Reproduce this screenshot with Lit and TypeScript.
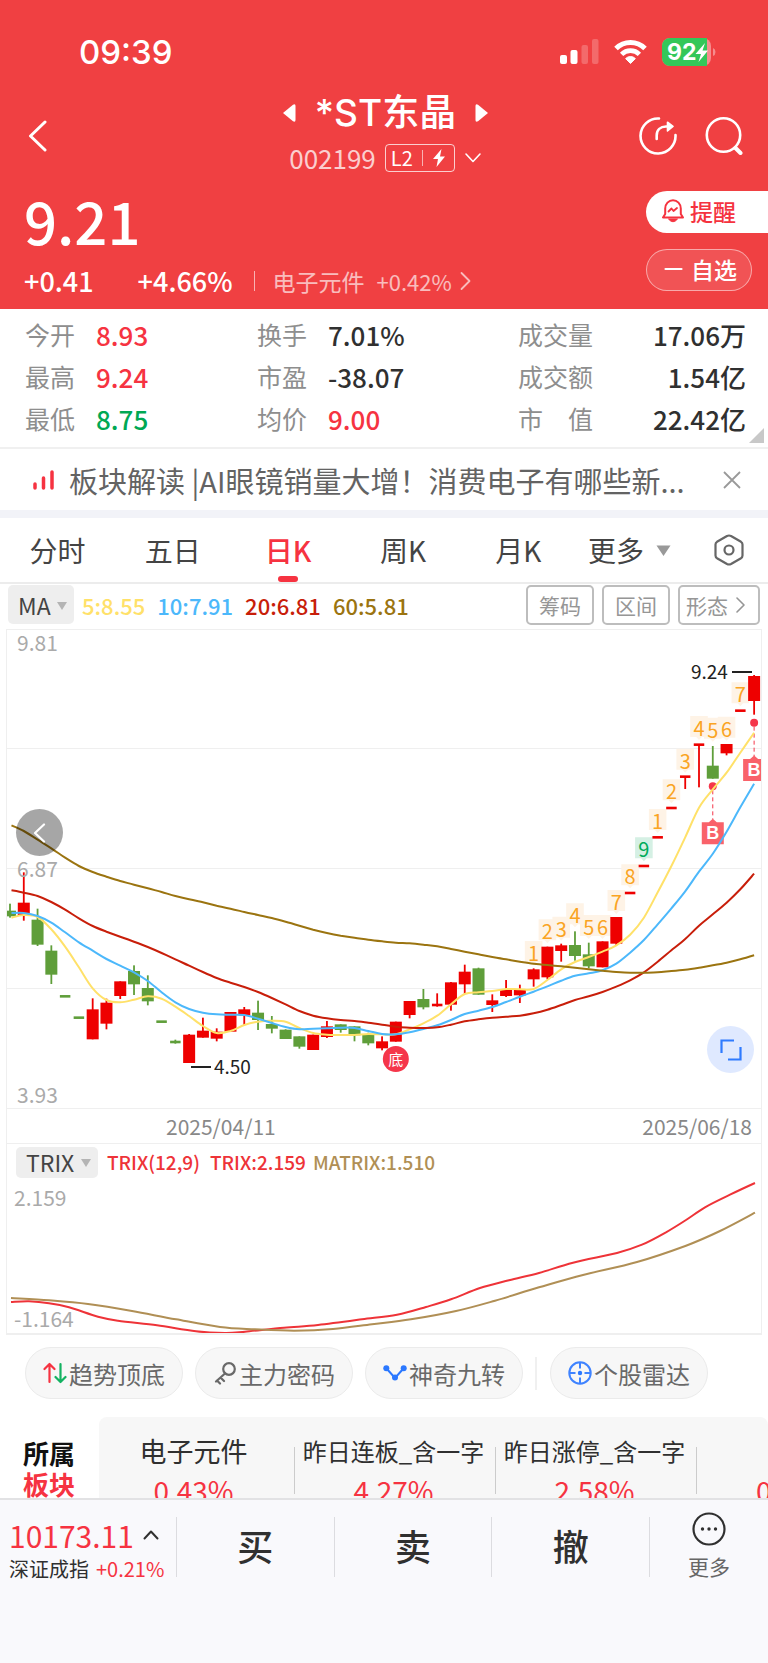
import { LitElement, html, svg, css } from "lit";
import { customElement, property, state } from "lit/decorators.js";
import { classMap } from "lit/directives/class-map.js";

/* Chart samples are stored in thirds of a pixel. */
const UNIT = 3;
const px = (v: number) => v / UNIT;
const STEP = 13.78;
const cx = (i: number) => 10 + STEP * i;

type Candle = [up: boolean, high: number, top: number, bottom: number, low: number];
const R = true;
const G = false;
const CANDLES: Candle[] = [
  [G, 851, 872, 889, 893], [R, 757, 848, 885, 902], [G, 866, 899, 974, 978],
  [G, 976, 992, 1064, 1092], [G, 1129, 1129, 1129, 1129], [G, 1193, 1193, 1193, 1193],
  [R, 1135, 1168, 1258, 1258], [R, 1136, 1148, 1211, 1228], [R, 1084, 1084, 1128, 1137],
  [G, 1036, 1053, 1093, 1125], [G, 1066, 1104, 1144, 1156], [G, 1205, 1205, 1205, 1205],
  [G, 1259, 1266, 1266, 1271], [R, 1242, 1244, 1329, 1329], [R, 1193, 1232, 1253, 1253],
  [R, 1225, 1235, 1256, 1264], [R, 1176, 1176, 1235, 1235], [R, 1161, 1168, 1186, 1216],
  [G, 1142, 1178, 1200, 1230], [G, 1188, 1212, 1226, 1240], [G, 1228, 1229, 1257, 1257],
  [G, 1249, 1249, 1280, 1286], [R, 1244, 1244, 1290, 1290], [R, 1203, 1219, 1251, 1254],
  [G, 1213, 1213, 1230, 1238], [G, 1219, 1219, 1246, 1264], [G, 1238, 1242, 1270, 1276],
  [R, 1249, 1264, 1285, 1291], [R, 1205, 1205, 1265, 1265], [R, 1143, 1143, 1185, 1195],
  [G, 1107, 1137, 1162, 1168], [R, 1120, 1155, 1155, 1160], [R, 1086, 1087, 1154, 1172],
  [R, 1034, 1055, 1093, 1122], [G, 1043, 1045, 1124, 1124], [R, 1123, 1141, 1155, 1176],
  [R, 1080, 1110, 1128, 1131], [R, 1094, 1110, 1126, 1149], [R, 1045, 1048, 1078, 1100],
  [R, 980, 980, 1072, 1078], [R, 971, 976, 993, 1025], [G, 934, 975, 1008, 1022],
  [G, 968, 1003, 1039, 1045], [R, 964, 964, 1042, 1042], [R, 891, 891, 971, 975],
  [R, 819, 819, 819, 819], [R, 738, 738, 738, 738], [R, 652, 652, 652, 652],
  [R, 564, 564, 564, 564], [R, 469, 470, 470, 507], [R, 373, 374, 374, 502],
  [G, 378, 437, 476, 476], [R, 372, 372, 400, 406], [R, 272, 272, 272, 272],
  [R, 165, 168, 243, 284],
];

const AVERAGES: { cls: string; values: number[] }[] = [
  {
    cls: "ma5",
    values: [893, 885, 891, 928, 980, 1042, 1105, 1140, 1147, 1139, 1129, 1136, 1160, 1188, 1218, 1239, 1233, 1215, 1205, 1202, 1205, 1224, 1239, 1244, 1245, 1245, 1242, 1243, 1243, 1228, 1210, 1187, 1153, 1122, 1117, 1113, 1107, 1108, 1107, 1080, 1048, 1026, 1011, 995, 976, 944, 893, 817, 738, 652, 563, 508, 458, 398, 338],
  },
  {
    cls: "ma10",
    values: [879, 879, 888, 908, 937, 967, 992, 1017, 1037, 1057, 1083, 1117, 1147, 1167, 1178, 1183, 1184, 1185, 1196, 1209, 1221, 1228, 1226, 1225, 1223, 1224, 1233, 1242, 1243, 1237, 1227, 1216, 1200, 1182, 1172, 1161, 1146, 1130, 1115, 1099, 1082, 1067, 1060, 1051, 1031, 998, 960, 913, 865, 814, 755, 701, 635, 562, 491],
  },
  {
    cls: "ma20",
    values: [811, 818, 828, 846, 869, 895, 918, 935, 950, 965, 981, 999, 1018, 1037, 1056, 1074, 1088, 1101, 1116, 1134, 1153, 1173, 1187, 1195, 1200, 1203, 1208, 1214, 1220, 1223, 1224, 1222, 1214, 1204, 1198, 1193, 1190, 1187, 1180, 1169, 1155, 1140, 1129, 1116, 1100, 1081, 1057, 1025, 991, 957, 917, 883, 848, 808, 761],
  },
  {
    cls: "ma60",
    values: [616, 633, 659, 685, 713, 738, 756, 770, 783, 794, 805, 816, 828, 838, 847, 857, 866, 876, 885, 894, 905, 917, 929, 939, 947, 953, 959, 964, 968, 970, 974, 979, 987, 995, 1003, 1011, 1018, 1025, 1031, 1035, 1039, 1043, 1048, 1052, 1056, 1058, 1058, 1057, 1053, 1049, 1043, 1036, 1028, 1018, 1006],
  },
];

/* Nine-turn counters: candle index, digit, top of the tag. */
const TURNS: [number, string, number][] = [
  [38, "1", 963], [39, "2", 898], [40, "3", 890], [41, "4", 850], [42, "5", 885],
  [43, "6", 885], [44, "7", 810], [45, "8", 733], [46, "9", 652], [47, "1", 567],
  [48, "2", 478], [49, "3", 386], [50, "4", 288], [51, "5", 293], [52, "6", 290],
  [53, "7", 187],
];

/* Buy marks: candle index, dot, top of the tag. */
const BUYS: [number, number, number][] = [[51, 499, 607], [54, 308, 417]];

const TRIX: [number, number][] = [
  [11, 636], [29, 634], [49, 640], [69, 652], [98, 680], [118, 692], [157, 706], [196, 724],
  [225, 729], [245, 725], [284, 713], [318, 705], [362, 688], [397, 674], [426, 651],
  [451, 628], [480, 594], [509, 571], [539, 549], [573, 518], [617, 489], [642, 464],
  [666, 427], [686, 390], [705, 352], [730, 314], [755, 279],
];
const MATRIX: [number, number][] = [
  [11, 624], [49, 631], [88, 642], [132, 663], [176, 688], [220, 711], [255, 718],
  [294, 722], [333, 717], [372, 703], [411, 688], [456, 663], [495, 632], [539, 592],
  [583, 555], [637, 516], [686, 467], [720, 423], [755, 368],
];

function smooth(pts: [number, number][]): string {
  let d = `M${pts[0][0]} ${pts[0][1]}`;
  for (let i = 0; i < pts.length - 1; i++) {
    const p0 = pts[Math.max(i - 1, 0)];
    const p1 = pts[i];
    const p2 = pts[i + 1];
    const p3 = pts[Math.min(i + 2, pts.length - 1)];
    const c = [
      p1[0] + (p2[0] - p0[0]) / 6, p1[1] + (p2[1] - p0[1]) / 6,
      p2[0] - (p3[0] - p1[0]) / 6, p2[1] - (p3[1] - p1[1]) / 6,
      p2[0], p2[1],
    ].map((n) => n.toFixed(1));
    d += `C${c.join(" ")}`;
  }
  return d;
}

const base = css`
  :host {
    font-family: "Noto Sans CJK SC", "Noto Sans", sans-serif;
    color: #303030;
  }
  * {
    box-sizing: border-box;
  }
  button,
  select {
    font: inherit;
    color: inherit;
    background: none;
    border: 0;
    padding: 0;
    margin: 0;
    cursor: pointer;
  }
  a {
    color: inherit;
    text-decoration: none;
  }
  svg {
    display: block;
    flex: none;
  }
  .line {
    fill: none;
    stroke: currentColor;
    stroke-linecap: round;
    stroke-linejoin: round;
  }
`;

@customElement("stock-header")
export class StockHeader extends LitElement {
  static styles = [
    base,
    css`
      :host {
        display: block;
        background: #f04042;
        color: #fff;
      }
      .status {
        display: flex;
        align-items: center;
        justify-content: space-between;
        height: 91px;
        padding: 12px 52px 0 79px;
      }
      .clock {
        font: 500 33px/40px Inter, "Liberation Sans", sans-serif;
      }
      .signals {
        display: flex;
        align-items: center;
        gap: 15px;
      }
      .pct {
        font: 700 23px Inter, "Liberation Sans", sans-serif;
        fill: #fff;
      }
      .nav {
        display: grid;
        grid-template-columns: 1fr auto 1fr;
        height: 90px;
        padding: 0 25px 0 28px;
      }
      .back {
        display: flex;
        align-items: center;
        width: 48px;
      }
      .title {
        display: flex;
        flex-direction: column;
        align-items: center;
        gap: 9px;
      }
      .name-row {
        display: flex;
        align-items: center;
        gap: 19px;
      }
      h1 {
        margin: 0;
        font: 500 37px/44px Inter, "Noto Sans CJK SC", sans-serif;
      }
      .code-row {
        display: flex;
        align-items: center;
        gap: 9px;
        height: 28px;
        font-size: 26px;
        line-height: 28px;
      }
      .code {
        opacity: 0.75;
      }
      .level {
        display: flex;
        align-items: center;
        gap: 9px;
        height: 28px;
        padding: 0 8px 0 5px;
        border: 1px solid rgba(255, 255, 255, 0.75);
        border-radius: 4px;
        font-size: 20px;
        line-height: 26px;
      }
      .bar {
        width: 1px;
        height: 16px;
        background: currentColor;
        opacity: 0.6;
      }
      .tools {
        display: flex;
        justify-content: flex-end;
        align-items: center;
        gap: 28px;
      }
      .quote {
        display: flex;
        justify-content: space-between;
        padding: 10px 0 13px 24px;
      }
      .price {
        font-size: 58px;
        font-weight: 500;
        line-height: 58px;
        margin-bottom: 17px;
      }
      .change {
        display: flex;
        align-items: center;
        font-size: 27px;
        font-weight: 500;
        line-height: 30px;
      }
      .change .ratio {
        margin: 0 21px 0 44px;
      }
      .change .bar {
        height: 20px;
      }
      .industry {
        display: flex;
        align-items: center;
        gap: 12px;
        margin-left: 18px;
        font-size: 23px;
        font-weight: 400;
        opacity: 0.65;
      }
      .industry .tail {
        display: flex;
        align-items: center;
        gap: 8px;
        font-size: 22px;
      }
      .actions {
        display: flex;
        flex-direction: column;
        align-items: flex-end;
        gap: 16px;
      }
      .actions button {
        display: flex;
        align-items: center;
        gap: 6px;
        height: 42px;
        padding-bottom: 2px;
        font-size: 23px;
        font-weight: 500;
      }
      .remind {
        width: 122px;
        padding-left: 16px;
        border-radius: 21px 0 0 21px;
        background: #fff;
        color: #f5333f;
      }
      .actions .fav {
        width: 106px;
        margin-right: 16px;
        padding-left: 17px;
        gap: 8px;
        border: 1px solid rgba(255, 255, 255, 0.5);
        border-radius: 21px;
        background: rgba(255, 255, 255, 0.1);
      }
    `,
  ];

  render() {
    return html`
      <div class="status">
        <span class="clock">09:39</span>
        <div class="signals">
          <svg width="39" height="25" viewBox="0 0 39 25" fill="#fff" aria-label="信号">
            <rect x="0" y="16" width="7" height="9" rx="2" />
            <rect x="10.500" y="11" width="7" height="14" rx="2" />
            <rect x="21.500" y="6" width="6.500" height="19" rx="2" opacity=".22" />
            <rect x="32" y="0" width="6.500" height="25" rx="2" opacity=".22" />
          </svg>
          <svg width="33" height="25" viewBox="0 0 33 25" aria-label="无线网络">
            <path d="M2 9.5A20.5 20.5 0 0 1 31 9.5" fill="none" stroke="#fff" stroke-width="5" />
            <path d="M7.6 15.3A12.5 12.5 0 0 1 25.4 15.3" fill="none" stroke="#fff" stroke-width="4.6" />
            <path d="M16.5 24.5L11.6 19.6A6.8 6.8 0 0 1 21.4 19.6Z" fill="#fff" stroke="#fff" stroke-linejoin="round" />
          </svg>
          <svg width="54" height="28" viewBox="0 0 54 28" aria-label="电量">
            <rect width="49" height="28" rx="8" fill="#fff" opacity=".4" />
            <path d="M8 0H45V28H8A8 8 0 0 1 0 20V8A8 8 0 0 1 8 0Z" fill="#34c759" />
            <path d="M51 10Q53.5 11 53.5 14T51 18Z" fill="#fff" opacity=".4" />
            <text class="pct" x="5" y="22">92</text>
            <path d="M43 5L33.500 16H39L36.500 24L46 12.500H40.500Z" fill="#fff" />
          </svg>
        </div>
      </div>
      <div class="nav">
        <button class="back" aria-label="返回">
          <svg width="20" height="32" viewBox="0 0 20 32"><path class="line" stroke-width="3" d="M17 2L2.500 16L17 30" /></svg>
        </button>
        <div class="title">
          <div class="name-row">
            <svg width="13" height="18" viewBox="0 0 13 18"><path d="M0 9L10 .8Q12.500 -.5 12.500 2V16Q12.500 18.500 10 17.200Z" fill="#fff" /></svg>
            <h1>*ST东晶</h1>
            <svg width="13" height="18" viewBox="0 0 13 18"><path d="M13 9L3 .8Q.5 -.5 .5 2V16Q.5 18.500 3 17.200Z" fill="#fff" /></svg>
          </div>
          <div class="code-row">
            <span class="code">002199</span>
            <span class="level">
              L2<span class="bar"></span>
              <svg width="14" height="18" viewBox="0 0 14 18"><path d="M9.500 0L1 10H6L4.500 18L13 7.500H8Z" fill="#fff" /></svg>
            </span>
            <svg width="18" height="12" viewBox="0 0 18 12"><path class="line" stroke-width="1.600" d="M2 2L9 9.500L16 2" /></svg>
          </div>
        </div>
        <div class="tools">
          <button aria-label="分享">
            <svg width="38" height="38" viewBox="0 0 38 38">
              <path class="line" stroke-width="2.600" d="M20 1.500A17.500 17.500 0 1 0 36.500 18" />
              <path class="line" stroke-width="2.600" d="M17.700 22V18.500C17.700 13 21.500 9.500 27 9.500H31" />
              <path d="M28.500 5.200L34 9.500L28.500 14Z" fill="#fff" stroke="#fff" stroke-width="1.600" stroke-linejoin="round" />
            </svg>
          </button>
          <button aria-label="搜索">
            <svg width="38" height="38" viewBox="0 0 38 38">
              <circle class="line" cx="18.500" cy="18" r="16.700" stroke-width="2.600" />
              <path class="line" stroke-width="4" d="M30.500 31L35.500 36" />
            </svg>
          </button>
        </div>
      </div>
      <div class="quote">
        <div>
          <div class="price">9.21</div>
          <div class="change">
            <span>+0.41</span><span class="ratio">+4.66%</span><span class="bar"></span>
            <a class="industry" href="#industry">
              <span>电子元件</span>
              <span class="tail">+0.42%
                <svg width="11" height="20" viewBox="0 0 11 20"><path class="line" stroke-width="1.800" d="M1.500 2L9.500 10L1.500 18" /></svg>
              </span>
            </a>
          </div>
        </div>
        <div class="actions">
          <button class="remind">
            <svg width="22" height="24" viewBox="0 0 22 24">
              <path class="line" stroke-width="2" d="M1 18.500H21L18.800 15V9.500A7.800 8.300 0 0 0 3.200 9.500V15Z" />
              <path class="line" stroke-width="1.800" d="M6.500 12.500L9.500 9.500L11.500 12L15 9" />
              <path d="M6.500 20H15.500Q11 25.500 6.500 20Z" fill="currentColor" stroke="currentColor" />
            </svg>
            提醒
          </button>
          <button class="fav">
            <svg width="19" height="4" viewBox="0 0 19 4"><path class="line" stroke-width="2.200" d="M1.500 2H17.500" /></svg>
            自选
          </button>
        </div>
      </div>
    `;
  }
}

@customElement("quote-stats")
export class QuoteStats extends LitElement {
  static styles = [
    base,
    css`
      :host {
        display: block;
        position: relative;
        border-bottom: 2px solid #f0f0f0;
      }
      dl {
        display: grid;
        grid-template-columns: 232fr 261fr 228fr;
        grid-auto-rows: 42px;
        margin: 0;
        padding: 5px 22px 7px 25px;
      }
      dl div {
        display: flex;
        align-items: center;
        gap: 21px;
      }
      dl div:nth-child(3n) {
        justify-content: space-between;
      }
      dt {
        font-size: 25px;
        line-height: 36px;
        color: #8e8e8e;
        padding-bottom: 2px;
      }
      dd {
        margin: 0;
        font-size: 26px;
        font-weight: 500;
        line-height: 36px;
      }
      .up {
        color: #f63341;
      }
      .down {
        color: #00a854;
      }
      .corner {
        position: absolute;
        right: 4px;
        bottom: 4px;
      }
    `,
  ];

  private rows = [
    ["今开", "8.93", "up"], ["换手", "7.01%", ""], ["成交量", "17.06万", ""],
    ["最高", "9.24", "up"], ["市盈", "-38.07", ""], ["成交额", "1.54亿", ""],
    ["最低", "8.75", "down"], ["均价", "9.00", "up"], ["市　值", "22.42亿", ""],
  ];

  render() {
    return html`
      <dl>
        ${this.rows.map(([k, v, c]) => html`<div><dt>${k}</dt><dd class=${c}>${v}</dd></div>`)}
      </dl>
      <svg class="corner" width="15" height="15" viewBox="0 0 15 15"><path d="M15 0V15H0Z" fill="#c8c8c8" /></svg>
    `;
  }
}

@customElement("news-strip")
export class NewsStrip extends LitElement {
  static styles = [
    base,
    css`
      :host {
        display: flex;
        align-items: center;
        height: 69px;
        padding: 0 27px 0 33px;
        border-bottom: 8px solid #f2f3f8;
      }
      .signal {
        color: #f63341;
      }
      a {
        flex: 1;
        min-width: 0;
        margin: 0 24px 0 15px;
        overflow: hidden;
        white-space: nowrap;
        font-size: 29px;
        line-height: 44px;
        color: #636363;
      }
    `,
  ];

  render() {
    return html`
      <svg class="signal" width="21" height="20" viewBox="0 0 21 20">
        <path class="line" stroke-width="3.500" d="M2 14V18M10.500 8V18M19 2V18" />
      </svg>
      <a href="#news">板块解读 |AI眼镜销量大增！消费电子有哪些新...</a>
      <button aria-label="关闭">
        <svg width="18" height="18" viewBox="0 0 18 18"><path fill="none" stroke="#999" stroke-width="1.800" d="M1 1L17 17M17 1L1 17" /></svg>
      </button>
    `;
  }
}

@customElement("period-tabs")
export class PeriodTabs extends LitElement {
  @state() private active = "日K";

  static styles = [
    base,
    css`
      :host {
        display: flex;
        align-items: center;
        height: 66px;
        border-bottom: 2px solid #ececec;
        font-size: 28px;
        line-height: 40px;
        color: #444;
      }
      .tab {
        position: relative;
        flex: 0 0 15%;
        height: 64px;
      }
      .tab.on {
        color: #f63341;
        font-weight: 500;
      }
      .tab.on::after {
        content: "";
        position: absolute;
        left: calc(50% - 10px);
        bottom: 0;
        width: 20px;
        height: 6px;
        border-radius: 3px;
        background: #f63341;
      }
      .more {
        display: flex;
        align-items: center;
        gap: 12px;
        margin-left: 12px;
      }
      .setup {
        margin: 0 24px 0 auto;
      }
    `,
  ];

  render() {
    return html`
      ${["分时", "五日", "日K", "周K", "月K"].map(
        (t) => html`<button
          class=${classMap({ tab: true, on: t === this.active })}
          aria-pressed=${t === this.active}
          @click=${() => (this.active = t)}
        >${t}</button>`
      )}
      <button class="more" aria-haspopup="true">
        更多<svg width="15" height="11" viewBox="0 0 15 11"><path d="M.5 .5H14.500L7.500 11Z" fill="#999" /></svg>
      </button>
      <button class="setup" aria-label="设置">
        <svg width="30" height="32" viewBox="0 0 30 32">
          <path fill="none" stroke="#666" stroke-width="2.200" stroke-linejoin="round" d="M13 2Q15 1 17 2L27 7.800Q28.500 8.800 28.500 10.500V21.500Q28.500 23.200 27 24.200L17 30Q15 31 13 30L3 24.200Q1.500 23.200 1.500 21.500V10.500Q1.500 8.800 3 7.800Z" />
          <circle cx="15" cy="16" r="4.500" fill="none" stroke="#666" stroke-width="2.200" />
        </svg>
      </button>
    `;
  }
}

@customElement("indicator-select")
export class IndicatorSelect extends LitElement {
  @property() value = "";
  @property() label = "";

  static styles = [
    base,
    css`
      :host {
        display: block;
        position: relative;
        border-radius: 5px;
        background: #eee;
        font-weight: 400;
      }
      select {
        appearance: none;
        display: block;
        width: 100%;
        height: 100%;
        padding-left: 10px;
        font-size: 23px;
        line-height: 28px;
        color: #444;
      }
      svg {
        position: absolute;
        right: 7px;
        top: 50%;
        margin-top: -3px;
        pointer-events: none;
      }
    `,
  ];

  render() {
    return html`
      <select aria-label=${this.label}><option>${this.value}</option></select>
      <svg width="10" height="8" viewBox="0 0 10 8"><path d="M0 0H10L5 8Z" fill="#b4b4b4" /></svg>
    `;
  }
}

@customElement("k-chart")
export class KChart extends LitElement {
  static styles = [
    base,
    css`
      :host {
        display: block;
      }
      .legend {
        display: flex;
        align-items: center;
        height: 45px;
        padding: 0 8px 4px;
        font-size: 22px;
        font-weight: 500;
      }
      .legend indicator-select {
        width: 66px;
        height: 39px;
        margin-right: 8px;
      }
      .legend span {
        margin-right: 12px;
      }
      .c5 {
        color: #ffe169;
      }
      .c10 {
        color: #4cb8fb;
      }
      .c20 {
        color: #c81e0a;
      }
      .c60 {
        color: #9b7410;
      }
      .tools {
        display: flex;
        gap: 8px;
        margin-left: auto;
      }
      .tools button {
        display: flex;
        align-items: center;
        gap: 8px;
        height: 40px;
        padding: 0 11px;
        border: 2px solid #bdbdbd;
        border-radius: 5px;
        font-size: 21px;
        font-weight: 400;
        color: #969696;
      }
      .tools button:last-child {
        padding: 0 13px 0 6px;
      }
      .frame {
        position: relative;
        margin: 0 6px;
        border: 1px solid #efefef;
      }
      .frame > svg {
        width: 100%;
        height: auto;
      }
      .grid {
        stroke: #efefef;
        stroke-width: 1;
      }
      .r {
        fill: #ee0000;
      }
      .g {
        fill: #5f9e3a;
      }
      .ma {
        fill: none;
        stroke-width: 2;
        stroke-linejoin: round;
      }
      .ma5 {
        stroke: #ffe169;
      }
      .ma10 {
        stroke: #4cb8fb;
      }
      .ma20 {
        stroke: #c81e0a;
      }
      .ma60 {
        stroke: #9b7410;
      }
      .axis {
        font-size: 21px;
        fill: #aaa;
      }
      .extreme {
        font-size: 19px;
        fill: #222;
      }
      .tag {
        fill: #fef3e6;
      }
      .tag.nine {
        fill: #d5f0e4;
      }
      .digit {
        font-size: 20px;
        fill: #faa423;
        text-anchor: middle;
      }
      .digit.nine {
        fill: #00ab5b;
      }
      .buy {
        fill: #f9626a;
      }
      .dot {
        fill: #f5364a;
      }
      .dash {
        stroke: #f5364a;
        stroke-width: 1;
        stroke-dasharray: 4 3;
      }
      .buy-text {
        font: 700 18px "Liberation Sans", sans-serif;
        fill: #fff;
        text-anchor: middle;
      }
      .bottom-text {
        font-size: 15px;
        fill: #fff;
        text-anchor: middle;
      }
      .round {
        position: absolute;
        display: flex;
        align-items: center;
        justify-content: center;
        width: 47px;
        height: 47px;
        border-radius: 50%;
      }
      .prev {
        left: 9px;
        top: 179px;
        background: rgba(0, 0, 0, 0.35);
        color: #fff;
      }
      .expand {
        right: 7px;
        bottom: 35px;
        background: #dfe9ff;
        color: #2f7bff;
      }
      .dates {
        display: flex;
        justify-content: space-between;
        height: 34px;
        margin: 0 6px;
        padding: 0 9px 0 159px;
        border: solid #efefef;
        border-width: 0 1px;
        font-size: 21px;
        line-height: 34px;
        color: #888;
      }
      .sub {
        border-bottom-width: 2px;
      }
      .sub-legend {
        display: flex;
        align-items: center;
        height: 36px;
        padding-left: 9px;
        font-size: 19px;
        font-weight: 500;
        line-height: 32px;
        color: #ee3338;
      }
      .sub-legend indicator-select {
        width: 82px;
        height: 31px;
        margin-right: 9px;
      }
      .sub-legend .first {
        margin-right: 10px;
      }
      .sub-legend .second {
        margin-right: 7px;
      }
      .tan {
        color: #b08f55;
      }
      .trix {
        stroke: #ee3338;
      }
      .matrix {
        stroke: #b08f55;
      }
    `,
  ];

  private candle([up, high, top, bottom, low]: Candle, i: number) {
    const cls = up ? "r" : "g";
    const flat = bottom - top < 3;
    const w = flat ? 10.5 : 12;
    const h = flat ? 2.6 : px(bottom - top);
    const y = flat ? px(top) - 1.3 : px(top);
    return svg`
      <rect class=${cls} x=${cx(i) - 0.9} y=${px(high)} width="1.800" height=${px(low - high)} />
      <rect class=${cls} x=${cx(i) - w / 2} y=${y} width=${w} height=${h} />`;
  }

  private main() {
    return html`<svg viewBox="7 10 754 478" role="img" aria-label="日K线">
      ${[128.5, 248.5, 368.5].map((y) => svg`<line class="grid" x1="7" x2="761" y1=${y} y2=${y} />`)}
      ${TURNS.map(([i, , t]) => svg`<path
        class=${i === 46 ? "tag nine" : "tag"}
        d="M${cx(i) - 8.8} ${px(t)}h17.600v21h-6l-2.800 3l-2.800 -3h-6z" />`)}
      ${CANDLES.map((c, i) => this.candle(c, i))}
      ${TURNS.map(([i, n, t]) => svg`<text
        class=${i === 46 ? "digit nine" : "digit"} x=${cx(i)} y=${px(t) + 20}>${n}</text>`)}
      ${BUYS.map(([i, dot, top]) => svg`
        <circle class="dot" cx=${cx(i)} cy=${px(dot)} r="4" />
        <line class="dash" x1=${cx(i)} x2=${cx(i)} y1=${px(dot) + 4} y2=${px(top) - 3} />
        <path class="buy" d="M${cx(i) - 11} ${px(top)}h7l4 -3.500l4 3.500h7v22h-22z" />
        <text class="buy-text" x=${cx(i)} y=${px(top) + 17}>B</text>`)}
      ${AVERAGES.map(({ cls, values }) => svg`<path
        class="ma ${cls}" d=${smooth(values.map((v, i) => [Math.max(cx(i), 11.5), px(v)]))} />`)}
      <circle class="dot" cx=${cx(28)} cy="439" r="13" />
      <text class="bottom-text" x=${cx(28)} y="444.500">底</text>
      <rect x="191" y="446" width="20" height="2" fill="#222" />
      <text class="extreme" x="214" y="454">4.50</text>
      <rect x="732" y="51" width="20" height="2" fill="#222" />
      <text class="extreme" x="691" y="59">9.24</text>
      <text class="axis" x="17" y="31">9.81</text>
      <text class="axis" x="17" y="257">6.87</text>
      <text class="axis" x="17" y="483">3.93</text>
    </svg>`;
  }

  private sub() {
    const line = (p: [number, number][]) => smooth(p.map(([x, y]) => [x, px(y)]));
    return html`<svg viewBox="7 90 754 153" role="img" aria-label="TRIX">
      <text class="axis" x="14" y="116">2.159</text>
      <text class="axis" x="14" y="237">-1.164</text>
      <path class="ma trix" d=${line(TRIX)} />
      <path class="ma matrix" d=${line(MATRIX)} />
    </svg>`;
  }

  render() {
    return html`
      <div class="legend">
        <indicator-select value="MA" label="主图指标"></indicator-select>
        <span class="c5">5:8.55</span><span class="c10">10:7.91</span>
        <span class="c20">20:6.81</span><span class="c60">60:5.81</span>
        <div class="tools">
          <button>筹码</button><button>区间</button>
          <button>形态<svg width="9" height="16" viewBox="0 0 9 16"><path class="line" stroke-width="1.600" d="M1 1L8 8L1 15" /></svg></button>
        </div>
      </div>
      <div class="frame">
        ${this.main()}
        <button class="round prev" aria-label="更早">
          <svg width="13" height="20" viewBox="0 0 13 20"><path class="line" stroke-width="2.200" d="M11 1.500L2 10L11 18.500" /></svg>
        </button>
        <button class="round expand" aria-label="全屏">
          <svg width="22" height="22" viewBox="0 0 22 22"><path fill="none" stroke="currentColor" stroke-width="2.200" d="M1.500 14V1.500H14M20.500 8V20.500H8" /></svg>
        </button>
      </div>
      <div class="dates"><span>2025/04/11</span><span>2025/06/18</span></div>
      <div class="frame sub">
        <div class="sub-legend">
          <indicator-select value="TRIX" label="副图指标"></indicator-select>
          <span class="first">TRIX(12,9)</span><span class="second">TRIX:2.159</span>
          <span class="tan">MATRIX:1.510</span>
        </div>
        ${this.sub()}
      </div>
    `;
  }
}

@customElement("tool-pills")
export class ToolPills extends LitElement {
  static styles = [
    base,
    css`
      :host {
        display: flex;
        align-items: center;
        gap: 12px;
        padding: 12px 24px 18px 25px;
      }
      button {
        display: flex;
        align-items: center;
        gap: 2px;
        height: 52px;
        padding: 0 17px;
        border: 1px solid #ebebeb;
        border-radius: 26px;
        background: #f7f7f7;
        font-size: 24px;
        color: #696969;
        white-space: nowrap;
      }
      .sep {
        width: 2px;
        height: 33px;
        margin-right: 1px;
        background: #f0f0f0;
      }
    `,
  ];

  render() {
    return html`
      <button>
        <svg width="24" height="24" viewBox="0 0 24 24" fill="none" stroke-width="2.200" stroke-linecap="round" stroke-linejoin="round">
          <path stroke="#f63341" d="M6.500 21V3.500M1.500 8L6.500 3L11.500 8" />
          <path stroke="#13b261" d="M17.500 3V20.500M12.500 16L17.500 21L22.500 16" />
        </svg>趋势顶底
      </button>
      <button>
        <svg width="24" height="24" viewBox="0 0 24 24" fill="none" stroke="#696969" stroke-width="2.200" stroke-linecap="round">
          <circle cx="16" cy="8" r="5.800" />
          <path d="M12 12.500L3 20.500M4 19.500L7 22.500M7.500 16.500L11 20" />
        </svg>主力密码
      </button>
      <button>
        <svg width="24" height="24" viewBox="0 0 24 24">
          <path fill="none" stroke="#2b78ff" stroke-width="2" d="M3.500 7.500L12 17L20.500 7.500" />
          <g fill="#2b78ff"><circle cx="3.300" cy="7.300" r="3" /><circle cx="12" cy="16.500" r="3" /><circle cx="20.700" cy="7.300" r="3" /></g>
        </svg>神奇九转
      </button>
      <span class="sep"></span>
      <button>
        <svg width="24" height="24" viewBox="0 0 24 24" fill="none" stroke="#3f83ff" stroke-width="2">
          <circle cx="12" cy="12" r="10.700" />
          <path d="M12 1V7.500M12 16.500V23M1 12H7.500M16.500 12H23" />
          <circle cx="12" cy="12" r="2.200" fill="#2b78ff" stroke="none" />
        </svg>个股雷达
      </button>
    `;
  }
}

@customElement("sector-strip")
export class SectorStrip extends LitElement {
  static styles = [
    base,
    css`
      :host {
        display: flex;
      }
      h2 {
        flex: 0 0 99px;
        margin: 0;
        padding: 20px 0 0 23px;
        font-size: 26px;
        font-weight: 700;
        line-height: 31px;
        color: #111;
      }
      h2 span {
        display: block;
        color: #f63341;
      }
      ul {
        flex: 1;
        display: flex;
        min-width: 0;
        height: 120px;
        margin: 0;
        padding: 0;
        overflow: hidden;
        list-style: none;
        border-radius: 8px 8px 0 0;
        background: #f7f7f7;
      }
      li {
        flex: 0 0 201px;
        display: flex;
        flex-direction: column;
        align-items: center;
        padding: 14px 2px 0 0;
        white-space: nowrap;
      }
      li:first-child {
        flex-basis: 195px;
        padding-right: 6px;
      }
      li + li {
        background: linear-gradient(#ccc, #ccc) 0 30px / 1px 47px no-repeat;
      }
      .name {
        height: 41px;
        font-size: 24px;
        line-height: 40px;
      }
      li:first-child .name {
        font-size: 27px;
      }
      .pct {
        font-size: 28px;
        line-height: 36px;
        color: #f63341;
      }
      li:last-child {
        align-items: flex-start;
        padding-left: 60px;
      }
    `,
  ];

  private sectors = [
    ["电子元件", "0.43%"],
    ["昨日连板_含一字", "4.27%"],
    ["昨日涨停_含一字", "2.58%"],
    ["", "0"],
  ];

  render() {
    return html`
      <h2>所属<span>板块</span></h2>
      <ul>
        ${this.sectors.map(([n, p]) => html`<li><span class="name">${n}</span><span class="pct">${p}</span></li>`)}
      </ul>
    `;
  }
}

@customElement("trade-bar")
export class TradeBar extends LitElement {
  static styles = [
    base,
    css`
      :host {
        display: flex;
        height: 165px;
        padding-top: 17px;
        border-top: 2px solid #e2e2e4;
        background: #f9f9fc;
      }
      .index {
        flex: 0 0 176px;
        height: 68px;
        padding-left: 9px;
        text-align: left;
        white-space: nowrap;
      }
      .value {
        display: flex;
        align-items: center;
        gap: 9px;
        font-size: 30px;
        line-height: 36px;
        color: #f63341;
      }
      .value svg {
        color: #303030;
      }
      .detail {
        display: flex;
        gap: 7px;
        font-size: 20px;
        line-height: 32px;
      }
      .detail em {
        font-style: normal;
        color: #f63341;
      }
      .act {
        flex: 1;
        height: 60px;
        padding-bottom: 4px;
        border-left: 1px solid #dcdce0;
        font-size: 36px;
        font-weight: 500;
        line-height: 52px;
      }
      .more {
        flex: 0 0 119px;
        display: flex;
        flex-direction: column;
        align-items: center;
        height: 60px;
        border-left: 1px solid #dcdce0;
        font-size: 21px;
        line-height: 30px;
        color: #666;
      }
      .more svg {
        margin: -5px 0 5px;
      }
    `,
  ];

  render() {
    return html`
      <button class="index">
        <span class="value">10173.11
          <svg width="16" height="10" viewBox="0 0 16 10"><path class="line" stroke-width="2" d="M1.500 8.500L8 1.500L14.500 8.500" /></svg>
        </span>
        <span class="detail">深证成指 <em>+0.21%</em></span>
      </button>
      <button class="act">买</button>
      <button class="act">卖</button>
      <button class="act">撤</button>
      <button class="more">
        <svg width="34" height="34" viewBox="0 0 34 34">
          <circle cx="17" cy="17" r="15.500" fill="none" stroke="#303030" stroke-width="2.200" />
          <g fill="#303030"><circle cx="10.500" cy="17" r="1.700" /><circle cx="17" cy="17" r="1.700" /><circle cx="23.500" cy="17" r="1.700" /></g>
        </svg>
        更多
      </button>
    `;
  }
}

@customElement("app-root")
export class AppRoot extends LitElement {
  static styles = [
    base,
    css`
      :host {
        display: flex;
        flex-direction: column;
        height: 100vh;
        background: #fff;
      }
      main {
        flex: 1;
        min-height: 0;
        overflow: hidden;
      }
    `,
  ];

  render() {
    return html`
      <main>
        <stock-header></stock-header>
        <quote-stats></quote-stats>
        <news-strip></news-strip>
        <period-tabs></period-tabs>
        <k-chart></k-chart>
        <tool-pills></tool-pills>
        <sector-strip></sector-strip>
      </main>
      <trade-bar></trade-bar>
    `;
  }
}
